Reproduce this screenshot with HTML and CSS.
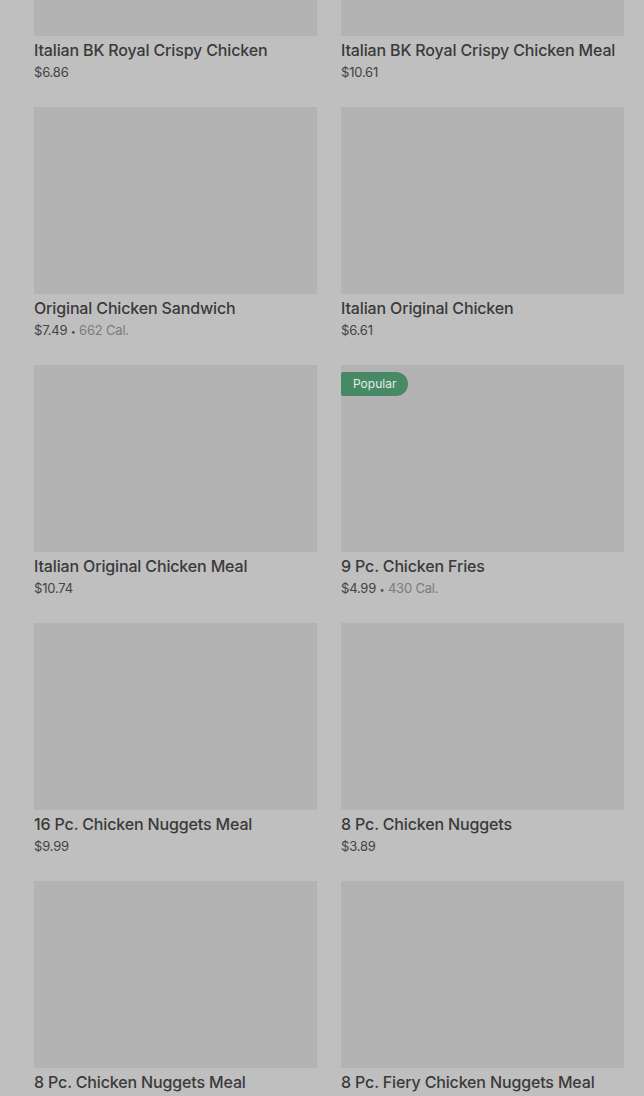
FILE: index.html
```html
<!DOCTYPE html>
<html lang="en">
<head>
    <meta charset="UTF-8">
    <meta name="viewport" content="width=device-width, initial-scale=1.0">
    <title>Menu</title>
    <link rel="stylesheet" href="styles.css">
</head>
<body>

    <div class="menu-grid">
        <div class="item">
            <div class="item-img"></div>
            <p class="item-name">Italian BK Royal Crispy Chicken</p>
            <p class="item-meta">$6.86</p>
        </div>
        <div class="item">
            <div class="item-img"></div>
            <p class="item-name">Italian BK Royal Crispy Chicken Meal</p>
            <p class="item-meta">$10.61</p>
        </div>

        <div class="item">
            <div class="item-img"></div>
            <p class="item-name">Original Chicken Sandwich</p>
            <p class="item-meta">$7.49 <span class="dot">•</span> <span class="cal">662 Cal.</span></p>
        </div>
        <div class="item">
            <div class="item-img"></div>
            <p class="item-name">Italian Original Chicken</p>
            <p class="item-meta">$6.61</p>
        </div>

        <div class="item">
            <div class="item-img"></div>
            <p class="item-name">Italian Original Chicken Meal</p>
            <p class="item-meta">$10.74</p>
        </div>
        <div class="item">
            <div class="item-img">
                <span class="badge">Popular</span>
            </div>
            <p class="item-name">9 Pc. Chicken Fries</p>
            <p class="item-meta">$4.99 <span class="dot">•</span> <span class="cal">430 Cal.</span></p>
        </div>

        <div class="item">
            <div class="item-img"></div>
            <p class="item-name">16 Pc. Chicken Nuggets Meal</p>
            <p class="item-meta">$9.99</p>
        </div>
        <div class="item">
            <div class="item-img"></div>
            <p class="item-name">8 Pc. Chicken Nuggets</p>
            <p class="item-meta">$3.89</p>
        </div>

        <div class="item">
            <div class="item-img"></div>
            <p class="item-name">8 Pc. Chicken Nuggets Meal</p>
        </div>
        <div class="item">
            <div class="item-img"></div>
            <p class="item-name">8 Pc. Fiery Chicken Nuggets Meal</p>
        </div>
    </div>

</body>
</html>
```

FILE: styles.css
```css
body {
    margin: 0;
    padding: 0;
    background: #bfbfbf;
    font-family: Inter, "Noto Sans", Arial, sans-serif;
    color: #3b3b3b;
    height: 1096px;
    overflow: hidden;
}

.menu-grid {
    display: grid;
    grid-template-columns: 283px 283px;
    column-gap: 24px;
    row-gap: 25px;
    margin: -151px 0 0 34px;
}

.item {
    height: 233px;
}

.item-img {
    position: relative;
    height: 187px;
    background: #b3b3b3;
}

.badge {
    position: absolute;
    top: 7px;
    left: 0;
    height: 24px;
    line-height: 24px;
    padding: 0 12px;
    background: #478a65;
    color: #e4ece7;
    font-size: 12px;
    border-radius: 2px 12px 12px 2px;
}

.item-name {
    margin: 2px 0 0 0;
    height: 24px;
    font-size: 16px;
    font-weight: 500;
    line-height: 24px;
    letter-spacing: -0.15px;
    white-space: nowrap;
    color: #3a3a3a;
}

.item-meta {
    margin: 0;
    height: 20px;
    font-size: 13px;
    line-height: 20px;
    color: #444;
    letter-spacing: -0.2px;
}

.dot {
    font-size: 9px;
    line-height: 1;
    color: #555;
}

.cal {
    color: #7b7b7b;
}
```
